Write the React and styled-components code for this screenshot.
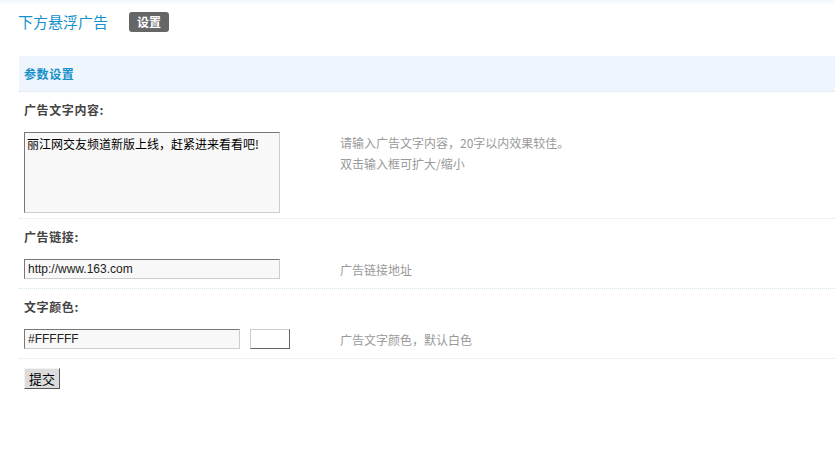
import React from 'react';
import styled, { createGlobalStyle } from 'styled-components';

const GlobalStyle = createGlobalStyle`
  html, body {
    margin: 0;
    padding: 0;
    background: #fff;
  }
  body {
    font-family: "Noto Sans CJK SC", "Liberation Sans", sans-serif;
    font-size: 12px;
    color: #333;
  }
`;

const fields = [
  {
    label: '广告文字内容:',
    kind: 'textarea',
    value: '丽江网交友频道新版上线，赶紧进来看看吧!',
    hints: ['请输入广告文字内容，20字以内效果较佳。', '双击输入框可扩大/缩小']
  },
  {
    label: '广告链接:',
    kind: 'input',
    value: 'http://www.163.com',
    hints: ['广告链接地址']
  },
  {
    label: '文字颜色:',
    kind: 'color',
    value: '#FFFFFF',
    hints: ['广告文字颜色，默认白色']
  }
];

export default function App() {
  return (
    <>
      <GlobalStyle />
      <Page>
        <Header>
          <Title>下方悬浮广告</Title>
          <Badge>设置</Badge>
        </Header>
        <Section>
          <SectionHead>参数设置</SectionHead>
          {fields.map(f => (
            <React.Fragment key={f.label}>
              <LabelRow>{f.label}</LabelRow>
              <FieldRow>
                <InputCell>
                  {f.kind === 'textarea' && (
                    <TextArea defaultValue={f.value} />
                  )}
                  {f.kind === 'input' && <TextInput defaultValue={f.value} />}
                  {f.kind === 'color' && (
                    <>
                      <TextInput $narrow defaultValue={f.value} />
                      <Swatch $color={f.value} />
                    </>
                  )}
                </InputCell>
                <HintCell>
                  {f.hints.map(h => (
                    <div key={h}>{h}</div>
                  ))}
                </HintCell>
              </FieldRow>
            </React.Fragment>
          ))}
          <SubmitRow>
            <Submit type="button">提交</Submit>
          </SubmitRow>
        </Section>
      </Page>
    </>
  );
}

const Page = styled.div`
  min-height: 453px;
  background: linear-gradient(#f1f7fa 0, #fff 5px);
`;

const Header = styled.div`
  display: flex;
  align-items: center;
  height: 56px;
  padding-left: 18px;
  padding-bottom: 12px;
  box-sizing: border-box;
`;

const Title = styled.h1`
  margin: 0;
  font-size: 15px;
  font-weight: normal;
  color: #1590ca;
  line-height: 20px;
`;

const Badge = styled.span`
  margin-left: 21px;
  width: 40px;
  height: 20px;
  border-radius: 3px;
  background: #666;
  color: #fff;
  font-weight: bold;
  font-size: 12px;
  line-height: 20px;
  text-align: center;
`;

const Section = styled.div`
  margin-left: 19px;
`;

const SectionHead = styled.div`
  height: 35px;
  line-height: 35px;
  padding-left: 5px;
  background: #eef5fc;
  border-bottom: 1px dotted #d4e4ec;
  color: #1590ca;
  font-weight: bold;
  font-size: 12px;
  letter-spacing: 0.6px;
`;

const LabelRow = styled.div`
  height: 35px;
  line-height: 36px;
  padding-left: 5px;
  color: #444;
  font-weight: bold;
  font-size: 12px;
  letter-spacing: 0.6px;
`;

const FieldRow = styled.div`
  display: flex;
  box-sizing: border-box;
  min-height: 35px;
  padding: 5px 0;
  border-bottom: 1px dotted #d4e6ee;
`;

const InputCell = styled.div`
  display: flex;
  align-items: flex-start;
  gap: 10px;
  width: 314px;
  padding-left: 5px;
  box-sizing: border-box;
`;

const HintCell = styled.div`
  padding-left: 7px;
  color: #999;
  font-size: 12px;
  line-height: 21px;
`;

const fieldBorder = `
  border: 1px solid;
  border-color: #777 #ccc #ccc #777;
  background: #f8f8f8;
  box-sizing: border-box;
  outline: none;
  margin: 0;
`;

const TextArea = styled.textarea`
  ${fieldBorder}
  width: 256px;
  height: 81px;
  padding: 2px 2px;
  resize: none;
  font-family: "Noto Sans CJK SC", sans-serif;
  font-size: 12px;
  line-height: 17px;
  color: #000;
`;

const TextInput = styled.input`
  ${fieldBorder}
  width: ${p => (p.$narrow ? '216px' : '256px')};
  height: 20px;
  padding: 0 3px;
  font-family: "Liberation Sans", Arial, sans-serif;
  font-size: 12px;
  color: #222;
`;

const Swatch = styled.span`
  width: 40px;
  height: 20px;
  box-sizing: border-box;
  border: 1px solid;
  border-color: #ccc #666 #666 #ccc;
  background: ${p => p.$color};
`;

const SubmitRow = styled.div`
  padding: 9px 5px;
`;

const Submit = styled.button`
  width: 36px;
  height: 21px;
  padding: 0;
  border: 1px solid;
  border-color: #f2f2f2 #555 #555 #f2f2f2;
  background: #dcdcdc;
  font-family: "Noto Sans CJK SC", sans-serif;
  font-size: 13px;
  line-height: 17px;
  color: #000;
`;
